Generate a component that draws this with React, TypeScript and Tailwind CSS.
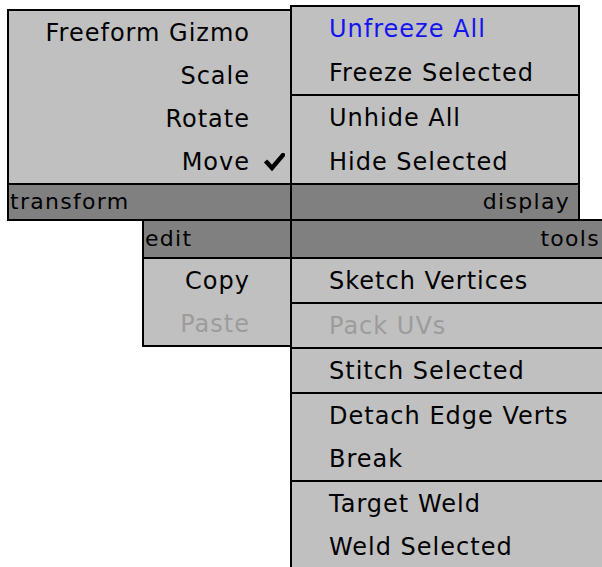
import React from "react";

type Entry = {
  label: string;
  tone?: "normal" | "active" | "disabled";
  checked?: boolean;
  h?: string;
};

const toneClass = {
  normal: "text-black",
  active: "text-[#1414f0]",
  disabled: "text-[#9c9c9c]",
};

function Check() {
  return (
    <svg width="21" height="18" viewBox="0 0 21 18">
      <path
        d="M3 9.5 L8 15 L19 2"
        fill="none"
        stroke="black"
        strokeWidth="4.4"
        strokeLinecap="square"
        strokeLinejoin="miter"
      />
    </svg>
  );
}

function LeftItem({ entry }: { entry: Entry }) {
  return (
    <div className={`flex items-center justify-end ${entry.h ?? "h-[43px]"}`}>
      <span className={toneClass[entry.tone ?? "normal"]}>{entry.label}</span>
      <span className="flex w-[40px] items-center pl-[14px]">
        {entry.checked && <Check />}
      </span>
    </div>
  );
}

function RightItem({ entry }: { entry: Entry }) {
  return (
    <div className={`flex items-center pl-[37px] ${entry.h ?? "h-[43px]"}`}>
      <span className={toneClass[entry.tone ?? "normal"]}>{entry.label}</span>
    </div>
  );
}

function Sections({
  sections,
  side,
}: {
  sections: Entry[][];
  side: "left" | "right";
}) {
  return (
    <>
      {sections.map((section, i) => (
        <div key={i} className={i > 0 ? "border-t-2 border-black" : ""}>
          {section.map((entry) =>
            side === "left" ? (
              <LeftItem key={entry.label} entry={entry} />
            ) : (
              <RightItem key={entry.label} entry={entry} />
            )
          )}
        </div>
      ))}
    </>
  );
}

function Header({ label, align, className }: { label: string; align: "left" | "right"; className: string }) {
  return (
    <div
      className={`flex items-center bg-[#808080] text-[22px] tracking-[1.3px] text-black ${
        align === "right" ? "justify-end pr-[8px]" : "pl-px"
      } ${className}`}
    >
      {label}
    </div>
  );
}

export default function App() {
  return (
    <div
      className="h-[567px] w-[602px] overflow-hidden bg-white text-[24px] leading-none tracking-[1px]"
      style={{ fontFamily: '"DejaVu Sans", sans-serif' }}
    >
      <div className="flex h-[221px] items-end">
        {/* transform quadrant */}
        <div className="ml-[7px] flex h-[212px] w-[285px] shrink-0 flex-col border-2 border-black bg-[#c0c0c0]">
          <Sections
            side="left"
            sections={[
              [
                { label: "Freeform Gizmo" },
                { label: "Scale" },
                { label: "Rotate" },
                { label: "Move", checked: true },
              ],
            ]}
          />
          <Header label="transform" align="left" className="h-[36px] border-t-2 border-black" />
        </div>

        {/* display quadrant */}
        <div className="-ml-[2px] flex h-[216px] w-[290px] shrink-0 flex-col border-2 border-black bg-[#c0c0c0]">
          <Sections
            side="right"
            sections={[
              [
                { label: "Unfreeze All", tone: "active", h: "h-[44px]" },
                { label: "Freeze Selected" },
              ],
              [
                { label: "Unhide All", h: "h-[44px]" },
                { label: "Hide Selected" },
              ],
            ]}
          />
          <Header label="display" align="right" className="h-[36px] border-t-2 border-black" />
        </div>
      </div>

      <div className="-mt-[2px] flex items-start">
        {/* edit quadrant */}
        <div className="ml-[142px] flex w-[150px] shrink-0 flex-col border-2 border-black bg-[#c0c0c0]">
          <Header label="edit" align="left" className="h-[38px] border-b-2 border-black" />
          <Sections
            side="left"
            sections={[[{ label: "Copy" }, { label: "Paste", tone: "disabled" }]]}
          />
        </div>

        {/* tools quadrant */}
        <div className="-ml-[2px] flex w-[320px] shrink-0 flex-col border-2 border-black bg-[#c0c0c0]">
          <Header label="tools" align="right" className="h-[38px] border-b-2 border-black" />
          <Sections
            side="right"
            sections={[
              [{ label: "Sketch Vertices" }],
              [{ label: "Pack UVs", tone: "disabled" }],
              [{ label: "Stitch Selected" }],
              [{ label: "Detach Edge Verts" }, { label: "Break" }],
              [{ label: "Target Weld" }, { label: "Weld Selected" }],
            ]}
          />
        </div>
      </div>
    </div>
  );
}
